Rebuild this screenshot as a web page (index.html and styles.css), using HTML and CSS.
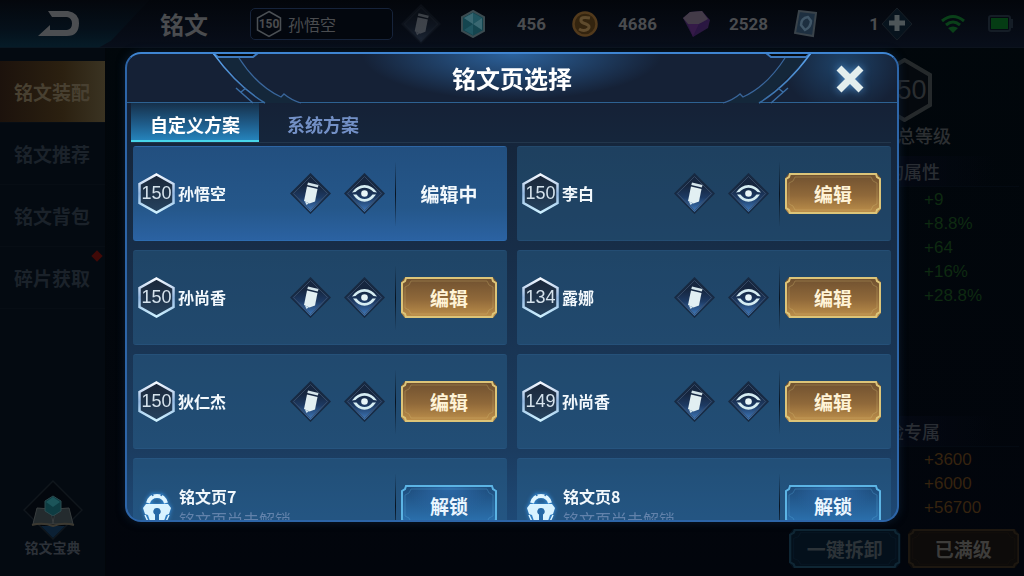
FILE: index.html
```html
<!DOCTYPE html>
<html lang="zh-CN">
  <head>
    <title>铭文</title>
    <meta charset="UTF-8"/>
    <link rel="stylesheet" href="styles.css">
  </head>
  <body>
    <!-- shared icons -->
    <svg class="defs" width="0" height="0" aria-hidden="true">
      <defs>
        <linearGradient id="hexLine" x1="0" y1="0" x2="0" y2="1">
          <stop offset="0" stop-color="#f4f8ff"/>
          <stop offset=".5" stop-color="#94b8e2"/>
          <stop offset="1" stop-color="#cdf0ff"/>
        </linearGradient>
        <linearGradient id="hexFill" x1="0" y1="0" x2="0" y2="1">
          <stop offset="0" stop-color="#1a2638"/>
          <stop offset="1" stop-color="#26435f"/>
        </linearGradient>
        <linearGradient id="diaFill" x1="0" y1="0" x2="0" y2="1">
          <stop offset=".3" stop-color="#16263f"/>
          <stop offset=".6" stop-color="#1d3a63"/>
          <stop offset="1" stop-color="#4480c4"/>
        </linearGradient>
        <linearGradient id="topLine" x1="0" y1="0" x2="1" y2="1">
          <stop offset="0" stop-color="#5ba4ee"/>
          <stop offset="1" stop-color="#35699f"/>
        </linearGradient>
      </defs>
      <symbol id="hex" viewBox="0 0 37 41">
        <path d="M18.500 1.500L35.500 11V30L18.500 39.500L1.500 30V11Z" fill="url(#hexFill)" stroke="url(#hexLine)" stroke-width="2.500"/>
      </symbol>
      <symbol id="pen" viewBox="0 0 41 41">
        <path d="M20.500 1L40 20.500L20.500 40L1 20.500Z" fill="url(#diaFill)" stroke="#182a42" stroke-width="1.500"/>
        <path d="M20.500 3.500L37.500 20.500L20.500 37.500L3.500 20.500Z" fill="none" stroke="#3d5169" stroke-width=".8"/>
        <path d="M18 9.500L28.500 12L27.800 14.500L17.300 12Z" fill="#d4e4ea"/>
        <path d="M17 13.500L27.500 16L25 28.500L19.500 30.500L14 28Z" fill="#e2eff2"/>
        <path d="M14.800 28.300L18.800 30.200L16.500 32Z" fill="#d4e6ee"/>
      </symbol>
      <symbol id="eye" viewBox="0 0 41 41">
        <path d="M20.500 1L40 20.500L20.500 40L1 20.500Z" fill="url(#diaFill)" stroke="#182a42" stroke-width="1.500"/>
        <path d="M20.500 3.500L37.500 20.500L20.500 37.500L3.500 20.500Z" fill="none" stroke="#3d5169" stroke-width=".8"/>
        <path d="M8 19.500Q13 12 20.500 12Q28 12 33 19.500L29.500 19Q25 14.800 20.500 14.800Q16 14.800 11.500 19Z" fill="#d5ecf2"/>
        <path d="M9 21.500Q14 28.800 20.500 28.800Q27 28.800 32 21.500H28.500Q25 26 20.500 26Q16 26 12.500 21.500Z" fill="#d5ecf2"/>
        <circle cx="20.500" cy="20.500" r="3.300" fill="#e8f5f8"/>
      </symbol>
      <symbol id="lock" viewBox="0 0 28 36">
        <path d="M5 10Q7 3 14 3Q21 3 23 10" fill="none" stroke="#dff5ff" stroke-width="4"/>
        <path d="M9 0L10 3M19 0L18 3" stroke="#2c6fae" stroke-width="1.500"/>
        <path d="M3 11H25L28 15L26 21L23 22L19 34L14 36L9 34L5 22L2 21L0 15Z" fill="#d9f3ff"/>
        <path d="M2 22L7 33M26 22L21 33" stroke="#d9f3ff" stroke-width="1.500"/>
        <path d="M14 15A3.500 3.500 0 0 1 16 21.500V27H12V21.500A3.500 3.500 0 0 1 14 15Z" fill="#2568a6"/>
      </symbol>
      <symbol id="frame" viewBox="0 0 96 41" preserveAspectRatio="none">
        <path d="M5 1H91L92 4L95 6V35L92 37L91 40H5L4 37L1 35V6L4 4Z" fill="none" stroke="currentColor" stroke-width="2"/>
        <path d="M10 4H86L88 8L92 10V31L88 33L86 37H10L8 33L4 31V10L8 8Z" fill="none" stroke="currentColor" stroke-width="1" opacity=".3"/>
      </symbol>
      <symbol id="corner" viewBox="0 0 100 54">
        <path d="M8 1L13 5H48L53 1V-2H8Z" fill="#04090f"/>
        <path d="M13 5H34Q52 34 76 44L79 42L94 51H60Q36 32 13 5Z" fill="#14273a"/>
        <path d="M8 1L13 5H48L53 1" fill="none" stroke="#3e79bd" stroke-width="2"/>
        <path d="M8 1Q32 34 60 51" fill="none" stroke="url(#topLine)" stroke-width="1.500"/>
        <path d="M34 6Q52 34 76 45L79 42Q86 48 96 51" fill="none" stroke="#39659a" stroke-width="1.300"/>
        <path d="M31 36L48 51M36 40L41 36" fill="none" stroke="#3a6da4" stroke-width="1.500"/>
      </symbol>
    </svg>

    <header class="topbar">
      <button class="back" aria-label="返回">
        <svg width="42" height="28" viewBox="0 0 42 28"><path d="M10 1H30Q41 3 41 13Q41 26 29 26H0L12 15V20H29Q34 19 34 13.500Q34 8 29 7H14Z" fill="#4c4e51"/></svg>
      </button>
      <h1>铭文</h1>
      <button class="page-select">
        <span class="mini-hex"><svg width="26" height="28" viewBox="0 0 26 28"><path d="M13 1.500L24.500 8V20L13 26.500L1.500 20V8Z" fill="none" stroke="#4b5054" stroke-width="1.500"/></svg><b>150</b></span>
        孙悟空
      </button>
      <button class="rename" aria-label="重命名"><svg width="40" height="40"><use href="#pen"/></svg></button>
      <ul class="wallet">
        <li>
          <svg width="24" height="28" viewBox="0 0 24 28"><path d="M12 1L23 7V21L12 27L1 21V7Z" fill="#14454f" stroke="#3b4b50" stroke-width="2"/><path d="M12 3L21 8L12 14L3 8ZM12 14V25L3 20Z" fill="#205560"/><path d="M12 3V14L3 8ZM12 14L21 8V20Z" fill="#3a6872"/></svg>
          456
        </li>
        <li>
          <svg width="26" height="28" viewBox="0 0 26 28"><circle cx="13" cy="14" r="11.500" fill="#33240f" stroke="#523a1c" stroke-width="2.500"/><path d="M18 8Q8 6 9 11Q10 13 14 14Q19 16 16 19Q12 22 7 19" fill="none" stroke="#5f4b2d" stroke-width="3"/></svg>
          4686
        </li>
        <li>
          <svg width="27" height="28" viewBox="0 0 27 28"><path d="M0 8L7 2L19 1L27 10L25 18L10 27Z" fill="#2a1840"/><path d="M0 8L7 2L19 1L25 9L16 14L5 14Z" fill="#433b48"/><path d="M5 14L16 14L10 27Z" fill="#351a48"/><path d="M16 14L27 10L10 27Z" fill="#2a1642"/></svg>
          2528
        </li>
        <li>
          <svg width="23" height="28" viewBox="0 0 23 28"><path d="M5 1L22 3L19 26L1 23Z" fill="#1d2f40" stroke="#3a434a" stroke-width="2"/><path d="M14 7Q7 8 7 15L11 20Q17 17 17 11Z" fill="none" stroke="#405667" stroke-width="2.500"/></svg>
          1
        </li>
      </ul>
      <button class="plus" aria-label="增加"><svg width="32" height="34" viewBox="0 0 32 34"><path d="M16 1L31 17L16 33L1 17Z" fill="#07131d" stroke="#171e25"/><path d="M16 8V24M8 16H24" stroke="#4d5558" stroke-width="5"/></svg></button>
      <svg class="wifi" width="26" height="20" viewBox="0 0 26 20"><path d="M2 7Q13-2 24 7M6 11Q13 5 20 11" fill="none" stroke="#0a4019" stroke-width="3"/><path d="M13 19L8 14Q13 11 18 14Z" fill="#0a4019"/></svg>
      <svg class="battery" width="26" height="17" viewBox="0 0 26 17"><rect x="1" y="1" width="21" height="15" rx="2" fill="none" stroke="#151d26" stroke-width="2"/><rect x="3" y="3" width="17" height="11" fill="#053c14"/><path d="M24 4V13" stroke="#151d26" stroke-width="2"/></svg>
    </header>

    <main>
      <nav class="sidebar">
        <a href="#" class="current">铭文装配</a>
        <a href="#">铭文推荐</a>
        <a href="#">铭文背包</a>
        <a href="#">碎片获取<i class="dot"></i></a>
        <a href="#" class="book">
          <svg width="60" height="60" viewBox="0 0 60 60"><path d="M30 1L59 30L30 59L1 30Z" fill="#03070d" stroke="#10161c" stroke-width="1.500"/><path d="M18 46L30 58L42 46Z" fill="#0b2034"/><path d="M14 28L28 29L30 44L10 44ZM32 29L46 28L50 44L30 44Z" fill="#242b2e" stroke="#3a3e3f"/><path d="M9 45Q20 42 30 46Q40 42 51 45" fill="none" stroke="#3c3931" stroke-width="2"/><path d="M30 16L38 21V31L30 36L22 31V21Z" fill="#0e3c42" stroke="#2c4a4f"/><path d="M30 17L37 22L30 27L23 22Z" fill="#1c555a"/></svg>
          铭文宝典
        </a>
      </nav>

      <aside class="stats">
        <div class="level">
          <svg width="55" height="64" viewBox="0 0 55 64"><path d="M27.500 2L53 17V47L27.500 62L2 47V17Z" fill="#05090e" stroke="#25292b" stroke-width="4"/></svg>
          <span>150</span>
        </div>
        <h3>总等级</h3>
        <h4>的属性</h4>
        <ul class="green">
          <li>+9</li>
          <li>+8.8%</li>
          <li>+64</li>
          <li>+16%</li>
          <li>+28.8%</li>
        </ul>
        <h4 class="second">验专属</h4>
        <ul class="orange">
          <li>+3600</li>
          <li>+6000</li>
          <li>+56700</li>
        </ul>
        <div class="actions">
          <button class="btn dim-blue"><svg class="frame"><use href="#frame"/></svg>一键拆卸</button>
          <button class="btn dim-gold"><svg class="frame"><use href="#frame"/></svg>已满级</button>
        </div>
      </aside>
    </main>

    <div class="overlay">
      <section class="dialog" role="dialog" aria-labelledby="dlgTitle">
        <svg class="corner left" width="100" height="54"><use href="#corner"/></svg>
        <svg class="corner right" width="100" height="54"><use href="#corner"/></svg>
        <div class="dialog-head">
          <h2 id="dlgTitle">铭文页选择</h2>
          <button class="close" aria-label="关闭">
            <svg width="30" height="30" viewBox="0 0 30 30"><path d="M4 4L26 26M26 4L4 26" stroke="#e3eeed" stroke-width="7"/></svg>
          </button>
        </div>
        <div class="tabs">
          <button class="tab on">自定义方案</button>
          <button class="tab">系统方案</button>
        </div>
        <ul class="pages">
          <li class="card active">
            <div class="badge"><svg><use href="#hex"/></svg><span>150</span></div>
            <div class="name">孙悟空</div>
            <button class="icon" aria-label="重命名"><svg><use href="#pen"/></svg></button>
            <button class="icon" aria-label="查看"><svg><use href="#eye"/></svg></button>
            <div class="act"><span class="editing">编辑中</span></div>
          </li>
          <li class="card">
            <div class="badge"><svg><use href="#hex"/></svg><span>150</span></div>
            <div class="name">李白</div>
            <button class="icon" aria-label="重命名"><svg><use href="#pen"/></svg></button>
            <button class="icon" aria-label="查看"><svg><use href="#eye"/></svg></button>
            <div class="act"><button class="btn gold"><svg class="frame"><use href="#frame"/></svg>编辑</button></div>
          </li>
          <li class="card">
            <div class="badge"><svg><use href="#hex"/></svg><span>150</span></div>
            <div class="name">孙尚香</div>
            <button class="icon" aria-label="重命名"><svg><use href="#pen"/></svg></button>
            <button class="icon" aria-label="查看"><svg><use href="#eye"/></svg></button>
            <div class="act"><button class="btn gold"><svg class="frame"><use href="#frame"/></svg>编辑</button></div>
          </li>
          <li class="card">
            <div class="badge"><svg><use href="#hex"/></svg><span>134</span></div>
            <div class="name">露娜</div>
            <button class="icon" aria-label="重命名"><svg><use href="#pen"/></svg></button>
            <button class="icon" aria-label="查看"><svg><use href="#eye"/></svg></button>
            <div class="act"><button class="btn gold"><svg class="frame"><use href="#frame"/></svg>编辑</button></div>
          </li>
          <li class="card">
            <div class="badge"><svg><use href="#hex"/></svg><span>150</span></div>
            <div class="name">狄仁杰</div>
            <button class="icon" aria-label="重命名"><svg><use href="#pen"/></svg></button>
            <button class="icon" aria-label="查看"><svg><use href="#eye"/></svg></button>
            <div class="act"><button class="btn gold"><svg class="frame"><use href="#frame"/></svg>编辑</button></div>
          </li>
          <li class="card">
            <div class="badge"><svg><use href="#hex"/></svg><span>149</span></div>
            <div class="name">孙尚香</div>
            <button class="icon" aria-label="重命名"><svg><use href="#pen"/></svg></button>
            <button class="icon" aria-label="查看"><svg><use href="#eye"/></svg></button>
            <div class="act"><button class="btn gold"><svg class="frame"><use href="#frame"/></svg>编辑</button></div>
          </li>
          <li class="card locked">
            <div class="badge"><svg class="lock"><use href="#lock"/></svg></div>
            <div class="name">铭文页7<small>铭文页尚未解锁</small></div>
            <div class="act"><button class="btn blue"><svg class="frame"><use href="#frame"/></svg>解锁</button></div>
          </li>
          <li class="card locked">
            <div class="badge"><svg class="lock"><use href="#lock"/></svg></div>
            <div class="name">铭文页8<small>铭文页尚未解锁</small></div>
            <div class="act"><button class="btn blue"><svg class="frame"><use href="#frame"/></svg>解锁</button></div>
          </li>
        </ul>
      </section>
    </div>
  </body>
</html>
```
FILE: styles.css
```css
* {
  box-sizing: border-box;
}
body {
  margin: 0;
  height: 100vh;
  display: flex;
  flex-direction: column;
  overflow: hidden;
  font-family: "Noto Sans CJK SC", sans-serif;
  color: #4a4c4f;
  background: linear-gradient(#01070b, #02050c);
}
h1, h2, h3, h4, ul {
  margin: 0;
  padding: 0;
  font-weight: 500;
}
ul {
  list-style: none;
}
button {
  padding: 0;
  border: none;
  background: none;
  color: inherit;
  font-family: inherit;
}
svg {
  display: block;
}
a {
  color: inherit;
  text-decoration: none;
}
.defs {
  position: absolute;
}

/* top bar */
.topbar {
  display: flex;
  align-items: center;
  height: 48px;
  padding-right: 10px;
  border-bottom: 1px solid #0c131d;
  background: linear-gradient(#03060b, #080e1a);
}
.back {
  width: 150px;
  height: 48px;
  padding-left: 38px;
  background: linear-gradient(#04070c, #05101a 60%, #061c28);
  clip-path: polygon(0 0, 100% 0, 74% 86%, 66% 100%, 0 100%);
}
.topbar h1 {
  margin-left: 10px;
  width: 90px;
  font-size: 24px;
  font-weight: 700;
  line-height: 44px;
}
.page-select {
  display: flex;
  align-items: center;
  gap: 6px;
  width: 143px;
  height: 32px;
  padding-left: 5px;
  border: 1px solid #16233a;
  border-radius: 5px;
  background: #03070e;
  font-size: 16px;
}
.mini-hex {
  display: grid;
  place-items: center;
  width: 26px;
}
.mini-hex > * {
  grid-area: 1 / 1;
}
.mini-hex b {
  font: bold 12px Roboto, sans-serif;
}
.rename {
  margin-left: 8px;
  opacity: .25;
  filter: saturate(.4);
}
.wallet {
  display: flex;
  flex: 1;
  gap: 26px;
  margin-left: 20px;
  font: bold 17px Roboto, sans-serif;
}
.wallet li {
  display: flex;
  flex: 1;
  align-items: center;
  justify-content: space-between;
}
.plus {
  margin-left: 2px;
}
.wifi {
  margin: 0 22px 0 27px;
}

/* page behind the dialog */
main {
  flex: 1;
  display: flex;
  justify-content: space-between;
}
.sidebar {
  display: flex;
  flex-direction: column;
  width: 106px;
  padding-top: 13px;
  border-right: 1px solid #02060a;
  background: #040a11;
}
.sidebar a {
  position: relative;
  height: 62px;
  padding-left: 14px;
  border-bottom: 1px solid #070d14;
  color: #1b222a;
  font-size: 19px;
  font-weight: 700;
  line-height: 62px;
}
.sidebar .current {
  color: #484031;
  background: linear-gradient(90deg, #1c120c, #2b2010 60%, #3a3322);
}
.dot {
  position: absolute;
  top: 5px;
  right: 4px;
  width: 8px;
  height: 8px;
  background: #400a08;
  transform: rotate(45deg);
}
.sidebar .book {
  display: flex;
  flex-direction: column;
  align-items: center;
  height: auto;
  margin-top: auto;
  padding: 0 0 22px;
  border: none;
  color: #2c3138;
  font-size: 14px;
  line-height: 14px;
}
.stats {
  display: flex;
  flex-direction: column;
  width: 240px;
  padding: 10px 5px 8px 0;
}
.level {
  display: grid;
  place-items: center;
  width: 240px;
  color: #2a2d30;
  font: 27px "Liberation Sans", sans-serif;
}
.level > * {
  grid-area: 1 / 1;
}
.stats h3 {
  padding-left: 113px;
  color: #2c2f32;
  font-size: 18px;
  line-height: 26px;
}
.stats h4 {
  margin-top: 8px;
  padding-left: 102px;
  border-bottom: 1px solid #040a12;
  background: linear-gradient(90deg, #040812 50%, transparent 90%);
  color: #292d33;
  font-size: 18px;
  line-height: 30px;
}
.stats h4.second {
  margin-top: auto;
}
.stats ul {
  padding: 1px 0 0 140px;
  font: 17px/24px "Liberation Sans", sans-serif;
}
.green {
  color: #0e2a11;
}
.orange {
  color: #35230f;
}
.actions {
  display: flex;
  gap: 7px;
  margin: 9px 0 0 5px;
}

/* framed buttons */
.btn {
  position: relative;
  flex: 1;
  height: 41px;
  font-size: 19px;
  font-weight: 700;
  line-height: 40px;
  clip-path: polygon(4px 0, calc(100% - 4px) 0, 100% 5px, 100% calc(100% - 5px), calc(100% - 4px) 100%, 4px 100%, 0 calc(100% - 5px), 0 5px);
}
.actions .btn {
  height: 39px;
}
.frame {
  position: absolute;
  inset: 0;
  width: 100%;
  height: 100%;
}
.gold {
  color: #fff3d6;
  background: linear-gradient(#6d4f2f, #90693a 55%, #c0924c);
}
.gold .frame {
  color: #dcc478;
}
.blue {
  color: #eaf6ff;
  background: radial-gradient(ellipse at top, #2c69a8, transparent 60%), linear-gradient(#1d4a78, #2d75b4);
}
.blue .frame {
  color: #5cb4e4;
}
.dim-blue {
  color: #2c3338;
  background: #04101b;
}
.dim-blue .frame {
  color: #0f2634;
}
.dim-gold {
  color: #3d3c3a;
  background: #0d0b0a;
}
.dim-gold .frame {
  color: #1d1710;
}

/* dialog */
.overlay {
  position: fixed;
  inset: 0;
  display: flex;
  padding: 52px 125px 54px;
}
.dialog {
  position: relative;
  flex: 1;
  display: flex;
  flex-direction: column;
  overflow: hidden;
  border: 2px solid #2d65a8;
  border-top-color: #3f85d2;
  border-radius: 16px;
  background: linear-gradient(#152136 10%, #15263c 20%, #1b3c60 85%, #1e4976);
  box-shadow: 0 0 8px #0b1c30;
}
.corner {
  position: absolute;
  top: -2px;
}
.corner.left {
  left: 78px;
}
.corner.right {
  right: 78px;
  transform: scaleX(-1);
}
.dialog-head {
  display: flex;
  align-items: center;
  justify-content: center;
  height: 49px;
  border-bottom: 1px solid #2d6292;
  background:
    radial-gradient(ellipse 150px 46px at 50% 0, #2c629c, transparent),
    radial-gradient(ellipse 60px 50px at 93% 20%, #1e4268, transparent);
}
.dialog-head h2 {
  color: #fff;
  font-size: 24px;
  font-weight: 700;
  line-height: 48px;
}
.close {
  position: absolute;
  top: 10px;
  right: 32px;
  filter: drop-shadow(0 0 4px #4d8cc8);
}
.tabs {
  display: flex;
  margin: 0 6px 0 4px;
  border-bottom: 1px solid #22364c;
}
.tab {
  width: 128px;
  height: 39px;
  padding-top: 5px;
  border-bottom: 2px solid transparent;
  color: #7390c6;
  font-size: 18px;
  font-weight: 700;
}
.tab.on {
  border-color: #48d6ea;
  background: linear-gradient(#16304a, #1f5f8e 60%, #2583bb);
  color: #fff;
}
.pages {
  flex: 1;
  display: grid;
  grid-template-columns: 1fr 1fr;
  grid-auto-rows: 95px;
  gap: 9px 10px;
  min-height: 0;
  padding: 3px 6px 0;
  overflow: hidden;
}
.card {
  display: flex;
  align-items: center;
  padding: 0 10px 0 5px;
  border: 1px solid rgba(70, 130, 180, .15);
  border-width: 1px 0;
  border-radius: 3px;
  background: rgba(45, 105, 150, .4);
  color: #f2f8fc;
}
.card.active {
  background: linear-gradient(#224f7f, #25578a 65%, #2b62a2);
  border-bottom-color: #2d6cb0;
}
.badge {
  display: grid;
  place-items: center;
  width: 37px;
  height: 41px;
  font: 18px "Liberation Sans", sans-serif;
  color: #d5e2ec;
}
.badge > * {
  grid-area: 1 / 1;
}
.badge svg, .icon svg {
  width: 100%;
  height: 100%;
}
.badge .lock {
  width: 28px;
  height: 36px;
  margin-top: 8px;
  overflow: visible;
  filter: drop-shadow(0 0 2px #3b9cf0);
}
.name {
  flex: 1;
  padding-left: 3px;
  font-size: 16px;
  font-weight: 700;
  line-height: 23px;
}
.name small {
  display: block;
  color: #6282ab;
  font-size: 16px;
  font-weight: 400;
}
.locked .name {
  padding: 4px 0 0 4px;
}
.icon {
  width: 41px;
  height: 41px;
  margin-right: 13px;
}
.icon + .act {
  margin-left: -3px;
}
.act {
  display: flex;
  align-items: center;
  width: 102px;
  height: 64px;
  padding-left: 5px;
  border-left: 1px solid;
  border-image: linear-gradient(transparent, #07121f, transparent) 1;
}
.editing {
  flex: 1;
  text-align: center;
  font-size: 19px;
  font-weight: 700;
}
```
